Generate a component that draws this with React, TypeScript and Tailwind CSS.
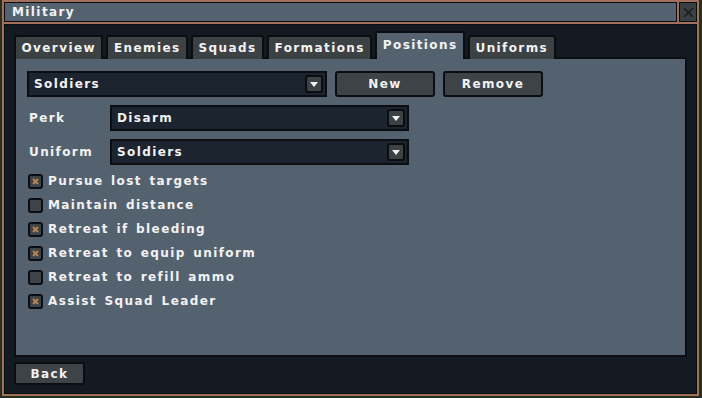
import { ReactNode } from 'react';

const font =
  "font-['DejaVu_Sans',sans-serif] font-bold text-[12px] tracking-[1.4px] [word-spacing:2px] text-[#f2f2f2]";

const tabs = ['Overview', 'Enemies', 'Squads', 'Formations', 'Positions', 'Uniforms'];

const options = [
  { label: 'Pursue lost targets', checked: true },
  { label: 'Maintain distance', checked: false },
  { label: 'Retreat if bleeding', checked: true },
  { label: 'Retreat to equip uniform', checked: true },
  { label: 'Retreat to refill ammo', checked: false },
  { label: 'Assist Squad Leader', checked: true },
];

function Arrow() {
  return (
    <span className="flex h-[18px] w-[18px] items-center justify-center rounded-[3px] border-2 border-[#0a0d11] bg-[#3c4144]">
      <svg width="8" height="5" viewBox="0 0 8 5">
        <path d="M0 0h8L4 5z" fill="#f2f2f2" />
      </svg>
    </span>
  );
}

function Dropdown({ value, className }: { value: string; className: string }) {
  return (
    <div
      className={`flex h-[26px] items-center justify-between border-2 border-[#0a0d11] bg-[#1c2430] pl-[5px] pr-[2px] ${className}`}
    >
      <span className={font}>{value}</span>
      <Arrow />
    </div>
  );
}

function Button({ children, className }: { children: ReactNode; className: string }) {
  return (
    <div
      className={`flex items-center justify-center rounded-[3px] border-2 border-[#0a0d11] bg-[#3d4346] ${font} ${className}`}
    >
      {children}
    </div>
  );
}

function Checkbox({ checked }: { checked: boolean }) {
  return (
    <span className="flex h-[15px] w-[15px] items-center justify-center rounded-[3px] border-2 border-[#0a0d11] bg-[#3e4347]">
      {checked && (
        <svg width="7" height="7" viewBox="0 0 7 7">
          <path d="M1 1l5 5M6 1L1 6" stroke="#c08352" strokeWidth="1.8" />
        </svg>
      )}
    </span>
  );
}

export default function App() {
  return (
    <div className="h-[398px] w-[702px] bg-[#25301f] pl-[2px]">
      <div className="flex h-[396px] w-[697px] flex-col gap-[2px] bg-[#a0705a] p-[2px]">
        {/* title bar */}
        <div className="flex h-[20px] gap-[2px]">
          <div className="flex flex-1 items-center border border-[#0a0d11] bg-[#546270] pl-[7px]">
            <span className={font}>Military</span>
          </div>
          <div className="flex w-[18px] items-center justify-center border border-[#0a0d11] bg-[#3a3f42]">
            <svg width="11" height="11" viewBox="0 0 11 11">
              <path d="M1 1l9 9M10 1l-9 9" stroke="#1a1e22" strokeWidth="1.6" />
            </svg>
          </div>
        </div>

        {/* body */}
        <div className="flex flex-1 flex-col border border-[#0a0d11] bg-[#131a22] px-[9px] pb-[7px] pt-[6px]">
          <div className="relative z-10 -mb-[2px] flex items-end gap-[3px]">
            {tabs.map((t) =>
              t === 'Positions' ? (
                <div
                  key={t}
                  className={`flex h-[28px] items-center rounded-t-[3px] border-2 border-b-0 border-[#0a0d11] bg-[#546270] px-[5.5px] pb-[3px] ${font}`}
                >
                  {t}
                </div>
              ) : (
                <div
                  key={t}
                  className={`flex h-[24px] items-center rounded-t-[3px] border-2 border-b-0 border-[#0a0d11] bg-[#3c4144] px-[5.5px] ${font}`}
                >
                  {t}
                </div>
              ),
            )}
          </div>

          <div className="flex h-[300px] flex-col gap-[8px] border-2 border-[#0a0d11] bg-[#546270] pl-[11px] pt-[12px]">
            <div className="flex gap-[8px]">
              <Dropdown value="Soldiers" className="w-[300px]" />
              <Button className="h-[26px] w-[100px]">New</Button>
              <Button className="h-[26px] w-[100px]">Remove</Button>
            </div>

            <div className="flex items-center">
              <span className={`w-[83px] pl-[2px] ${font}`}>Perk</span>
              <Dropdown value="Disarm" className="w-[299px]" />
            </div>

            <div className="flex items-center">
              <span className={`w-[83px] pl-[2px] ${font}`}>Uniform</span>
              <Dropdown value="Soldiers" className="w-[299px]" />
            </div>

            <div className="mt-[-2px] flex flex-col gap-[4px] pl-[1px]">
              {options.map((o) => (
                <div key={o.label} className="flex h-[20px] items-center gap-[5px]">
                  <Checkbox checked={o.checked} />
                  <span className={font}>{o.label}</span>
                </div>
              ))}
            </div>
          </div>

          <Button className="mt-[5px] h-[23px] w-[71px]">Back</Button>
        </div>
      </div>
    </div>
  );
}
